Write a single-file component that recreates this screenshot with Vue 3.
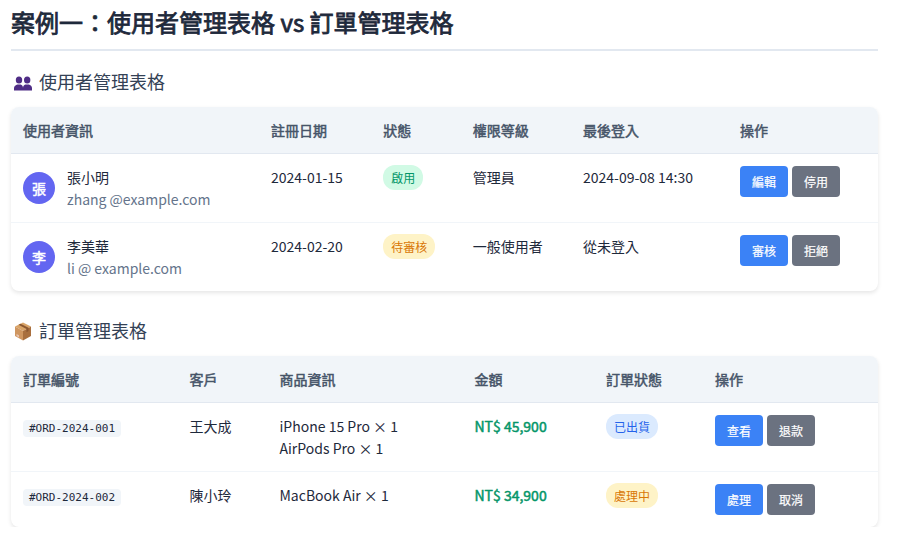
<script setup>
const users = [
  { avatar: '張', name: '張小明', email: 'zhang @example.com', date: '2024-01-15', status: '啟用', tone: 'green', role: '管理員', last: '2024-09-08 14:30', actions: ['編輯', '停用'] },
  { avatar: '李', name: '李美華', email: 'li @ example.com', date: '2024-02-20', status: '待審核', tone: 'yellow', role: '一般使用者', last: '從未登入', actions: ['審核', '拒絕'] },
]
const orders = [
  { id: '#ORD-2024-001', customer: '王大成', items: ['iPhone 15 Pro × 1', 'AirPods Pro × 1'], amount: 'NT$ 45,900', status: '已出貨', tone: 'blue', actions: ['查看', '退款'] },
  { id: '#ORD-2024-002', customer: '陳小玲', items: ['MacBook Air × 1'], amount: 'NT$ 34,900', status: '處理中', tone: 'yellow', actions: ['處理', '取消'] },
]
</script>

<template>
  <div class="page">
    <h2 class="title">案例一：使用者管理表格 vs 訂單管理表格</h2>

    <h3 class="sub">
      <svg class="icon" width="20" height="20" viewBox="0 0 20 20" aria-hidden="true">
        <g fill="#4f2d86">
          <ellipse cx="6" cy="8" rx="3.200" ry="3.600" />
          <path d="M1 18.500v-2.500c0-2.300 1.800-3 3.400-3.600h3.200c1.600.6 2.400 1.300 2.400 3.600v2.500z" />
          <ellipse cx="14.200" cy="8" rx="3.200" ry="3.600" />
          <path d="M10 18.500v-2.500c0-2.300.8-3 2.400-3.600h3.400c1.600.6 3.200 1.300 3.200 3.600v2.500z" />
        </g>
      </svg>
      使用者管理表格
    </h3>
    <div class="card">
      <table>
        <colgroup>
          <col class="u1" /><col class="u2" /><col class="u3" />
          <col class="u4" /><col class="u5" /><col class="u6" />
        </colgroup>
        <thead>
          <tr><th>使用者資訊</th><th>註冊日期</th><th>狀態</th><th>權限等級</th><th>最後登入</th><th>操作</th></tr>
        </thead>
        <tbody>
          <tr v-for="u in users" :key="u.name">
            <td>
              <div class="user">
                <span class="avatar">{{ u.avatar }}</span>
                <div>
                  <div>{{ u.name }}</div>
                  <div class="email">{{ u.email }}</div>
                </div>
              </div>
            </td>
            <td>{{ u.date }}</td>
            <td><span class="badge" :class="u.tone">{{ u.status }}</span></td>
            <td>{{ u.role }}</td>
            <td>{{ u.last }}</td>
            <td>
              <div class="actions">
                <button class="btn primary">{{ u.actions[0] }}</button>
                <button class="btn muted">{{ u.actions[1] }}</button>
              </div>
            </td>
          </tr>
        </tbody>
      </table>
    </div>

    <h3 class="sub second">
      <svg class="icon" width="20" height="20" viewBox="0 0 20 20" aria-hidden="true">
        <path d="M10 1.500 18 5.500 10 10 2 5.500z" fill="#d9a468" />
        <path d="M2 5.500 10 10V19.500L2 15z" fill="#cf9660" />
        <path d="M18 5.500 10 10V19.500L18 15z" fill="#a96f3e" />
        <path d="M5.500 3.700 13.500 7.900V11.200L15.500 10.100V6.800L7.500 2.700z" fill="#8a5730" />
        <path d="M3.500 13 6 14.300V16.400L3.500 15.100z" fill="#e8c4b0" />
      </svg>
      訂單管理表格
    </h3>
    <div class="card">
      <table>
        <colgroup>
          <col class="o1" /><col class="o2" /><col class="o3" />
          <col class="o4" /><col class="o5" /><col class="o6" />
        </colgroup>
        <thead>
          <tr><th>訂單編號</th><th>客戶</th><th>商品資訊</th><th>金額</th><th>訂單狀態</th><th>操作</th></tr>
        </thead>
        <tbody>
          <tr v-for="o in orders" :key="o.id">
            <td><code>{{ o.id }}</code></td>
            <td>{{ o.customer }}</td>
            <td><div v-for="item in o.items" :key="item">{{ item }}</div></td>
            <td class="amount">{{ o.amount }}</td>
            <td><span class="badge" :class="o.tone">{{ o.status }}</span></td>
            <td>
              <div class="actions">
                <button class="btn primary">{{ o.actions[0] }}</button>
                <button class="btn muted">{{ o.actions[1] }}</button>
              </div>
            </td>
          </tr>
        </tbody>
      </table>
    </div>
  </div>
</template>

<style>
body { background: #fff; }
</style>

<style scoped>
.page {
  padding: 0 19px 0 11px;
  font-family: "Noto Sans CJK TC", "Noto Sans", sans-serif;
  font-size: 14px;
  line-height: 22px;
  color: #1e293b;
}
.title {
  margin: 0;
  padding: 3px 0 8px;
  font-size: 24px;
  line-height: 38px;
  font-weight: 400;
  -webkit-text-stroke: 0.8px #1e293b;
  color: #1e293b;
  border-bottom: 2px solid #e2e8f0;
}
.sub {
  display: flex;
  align-items: center;
  gap: 6px;
  margin: 16px 0 11px;
  padding-left: 3px;
  font-size: 18px;
  line-height: 29px;
  font-weight: 400;
  color: #334155;
}
.icon { flex: none; margin-left: -1px; }
.sub.second { margin-top: 25px; }
.card {
  border-radius: 8px;
  overflow: hidden;
  box-shadow: 0 2px 4px rgba(0, 0, 0, 0.1);
  background: #fff;
}
table {
  width: 100%;
  table-layout: fixed;
  border-collapse: collapse;
}
.u1 { width: 248px; }
.u2 { width: 112.300px; }
.u3 { width: 89.400px; }
.u4 { width: 110.300px; }
.u5 { width: 157px; }
.u6 { width: 150px; }
.o1 { width: 166.500px; }
.o2 { width: 90px; }
.o3 { width: 195px; }
.o4 { width: 131.500px; }
.o5 { width: 109px; }
.o6 { width: 175px; }
th {
  padding: 12px;
  text-align: left;
  font-weight: 400;
  -webkit-text-stroke: 0.5px #475569;
  color: #475569;
  background: #f1f5f9;
  border-bottom: 1px solid #e2e8f0;
}
td {
  padding: 12px;
  vertical-align: top;
  color: #1e293b;
  border-bottom: 1px solid #f1f5f9;
}
tbody tr:last-child td { border-bottom: 0; }
.user {
  display: flex;
  align-items: center;
  gap: 12px;
}
.avatar {
  flex: none;
  width: 32px;
  height: 32px;
  border-radius: 50%;
  display: flex;
  align-items: center;
  justify-content: center;
  background: #6366f1;
  color: #fff;
  -webkit-text-stroke: 0.5px #fff;
}
.email { color: #64748b; }
.badge {
  display: inline-block;
  margin-top: -1px;
  padding: 3px 8px;
  border-radius: 12px;
  font-size: 12px;
  line-height: 19px;
  vertical-align: top;
}
.green { background: #d1fae5; color: #059669; }
.yellow { background: #fef3c7; color: #d97706; }
.blue { background: #dbeafe; color: #2563eb; }
.actions { display: flex; gap: 4px; }
.btn {
  padding: 6px 12px;
  border: 0;
  border-radius: 4px;
  font-family: inherit;
  font-size: 12px;
  line-height: 19px;
  color: #fff;
  -webkit-text-stroke: 0.2px #fff;
}
.primary { background: #3b82f6; }
.muted { background: #6b7280; }
code {
  padding: 2px 6px;
  border-radius: 4px;
  background: #f1f5f9;
  font-family: "DejaVu Sans Mono", monospace;
  font-size: 11px;
}
.amount {
  font-weight: 400;
  color: #059669;
  -webkit-text-stroke: 0.5px #059669;
}
</style>
